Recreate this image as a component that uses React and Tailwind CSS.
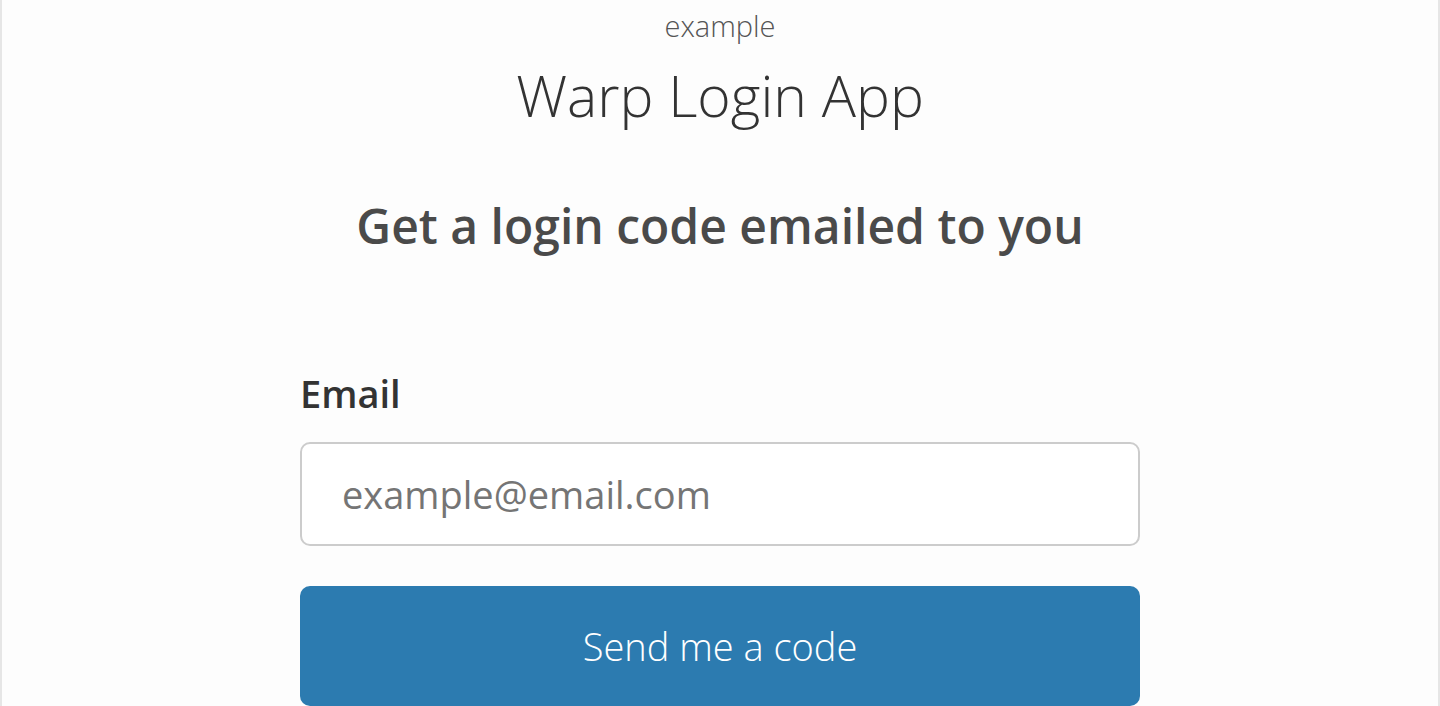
export default function App() {
  return (
    <div className="min-h-screen bg-[#e6e6e6] px-[2px]" style={{ fontFamily: '"Open Sans", "Noto Sans", sans-serif' }}>
      <div className="min-h-screen bg-[#fdfdfd] flex flex-col items-center">
        <div className="pt-[6px] text-[29px] font-light leading-[40px] text-[#555]">example</div>
        <h1 className="mt-[13px] text-[57px] font-light leading-[72px] text-[#333]">Warp Login App</h1>

        <h2 className="mt-[67px] text-[48px] font-semibold leading-[56px] text-[#4a4a4a]">
          Get a login code emailed to you
        </h2>

        <form className="mt-[117px] w-[840px] flex flex-col">
          <label className="text-[38px] font-semibold leading-[44px] text-[#333]">Email</label>
          <input
            type="email"
            placeholder="example@email.com"
            className="mt-[27px] h-[104px] w-full rounded-[10px] border-2 border-[#ccc] bg-white px-[40px] text-[38px] text-[#333] placeholder:text-[#757575] outline-none"
          />
          <button
            type="button"
            className="mt-[40px] h-[120px] w-full rounded-[10px] bg-[#2c7bb0] text-[38px] font-light text-white"
          >
            Send me a code
          </button>
        </form>
      </div>
    </div>
  );
}
